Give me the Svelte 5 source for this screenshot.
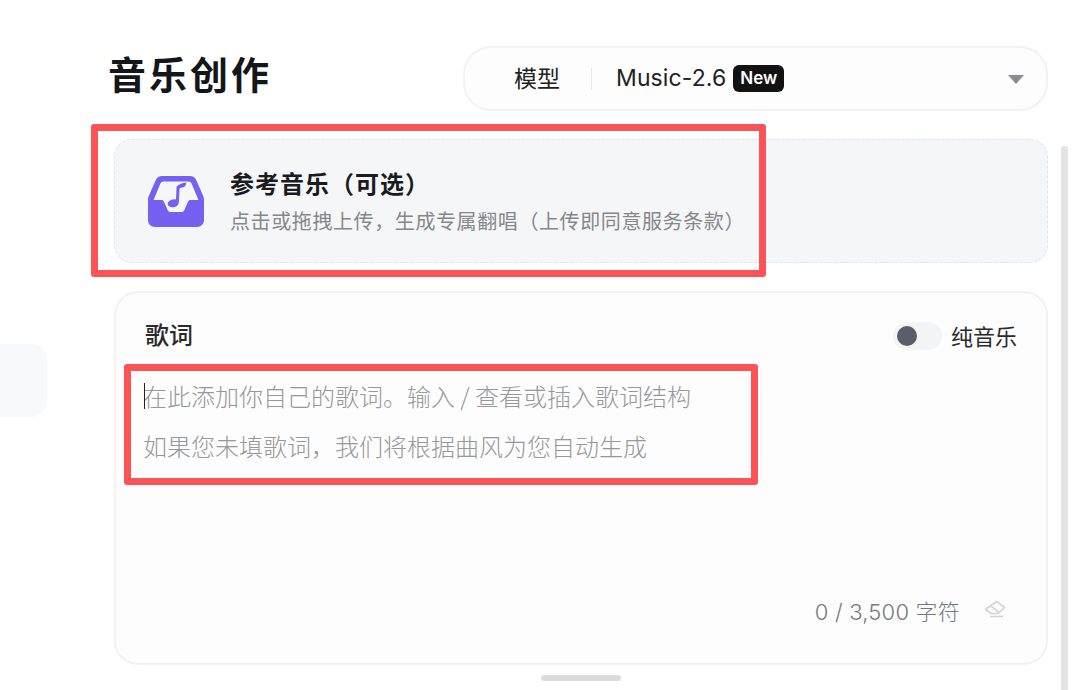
<script lang="ts">
  // Music creation panel, with the two red annotation frames on top.
  const lyricsHints = [
    "在此添加你自己的歌词。输入 / 查看或插入歌词结构",
    "如果您未填歌词，我们将根据曲风为您自动生成",
  ];
</script>

<div class="page">
  <div class="side-stub"></div>

  <main class="panel">
    <header class="head">
      <h1 class="title">音乐创作</h1>
      <div class="model">
        <span class="model-label">模型</span>
        <span class="model-sep"></span>
        <span class="model-name">Music-2.6</span>
        <span class="model-new">New</span>
        <span class="model-caret"></span>
      </div>
    </header>

    <section class="upload">
      <svg class="upload-icon" viewBox="0 0 56 51" width="56" height="51" aria-hidden="true">
        <path
          fill="#7461f1"
          fill-rule="evenodd"
          d="M14 0H42C45 0 47 1.5 48.2 4L55 19.5C55.7 21 56 22.5 56 24.5V44C56 48 53 51 49 51H7C3 51 0 48 0 44V24.5C0 22.5 .3 21 1 19.5L7.8 4C9 1.5 11 0 14 0ZM15.5 5.5C14 5.5 13 6.2 12.4 7.5L5.6 24H13.5C14.6 24 15.4 24.6 15.9 25.6L19.4 33.5C20 35.2 21 36 22.5 36H33.5C35 36 36 35.2 36.6 33.5L40.1 25.6C40.6 24.6 41.4 24 42.5 24H50.4L43.6 7.5C43 6.2 42 5.5 40.5 5.5Z"
        />
        <path
          fill="#7461f1"
          d="M28.6 10.4C31 8.2 34.4 6.8 38.2 6.4C38.2 9.4 36.8 11 34.2 11.6L31.6 12.2L30.8 26.4C30.5 29.6 27.4 31.6 23.8 31.2C20.6 30.8 19 28.8 20 26.6C21 24.4 24.6 22.8 28 23.4Z"
        />
      </svg>
      <div class="upload-text">
        <div class="upload-title">参考音乐（可选）</div>
        <div class="upload-sub">点击或拖拽上传，生成专属翻唱（上传即同意服务条款）</div>
      </div>
    </section>

    <section class="lyrics">
      <div class="lyrics-head">
        <span class="lyrics-title">歌词</span>
        <div class="pure">
          <span class="toggle"><span class="toggle-knob"></span></span>
          <span class="pure-label">纯音乐</span>
        </div>
      </div>
      <div class="lyrics-hints">
        <span class="caret"></span>
        {#each lyricsHints as hint}
          <p class="hint">{hint}</p>
        {/each}
      </div>
      <div class="lyrics-foot">
        <span class="count">0 / 3,500 字符</span>
        <svg class="eraser" viewBox="0 0 22 18" width="22" height="18" aria-hidden="true">
          <path
            fill="none"
            stroke="#d4d4d4"
            stroke-width="1.6"
            stroke-linejoin="round"
            d="M12.5 1.5L20.5 7.5L14 13.5H7L1.5 9.5ZM6.5 5.8L14.8 12M6 16.5H19"
          />
        </svg>
      </div>
    </section>
  </main>

  <div class="handle"></div>
  <div class="scrollbar"></div>

  <div class="mark mark-upload"></div>
  <div class="mark mark-lyrics"></div>
</div>

<style>
  :global(body) {
    margin: 0;
    background: #fff;
  }
  .page {
    position: relative;
    width: 1080px;
    height: 690px;
    overflow: hidden;
    background: #fff;
    font-family: "Noto Sans CJK SC", "Noto Sans", sans-serif;
    color: #17181a;
  }
  .side-stub {
    position: absolute;
    left: 0;
    top: 344px;
    width: 47px;
    height: 73px;
    background: #f8f9fa;
    border-radius: 0 16px 16px 0;
  }
  .panel {
    display: flex;
    flex-direction: column;
    width: 940px;
    margin-left: 108px;
    padding-top: 46px;
  }
  .head {
    display: flex;
    align-items: center;
    justify-content: space-between;
    height: 65px;
  }
  .title {
    margin: 0 0 11px;
    font-size: 38px;
    line-height: 56px;
    font-weight: 700;
    letter-spacing: 3px;
    color: #14161a;
  }
  .model {
    display: flex;
    align-items: center;
    box-sizing: border-box;
    width: 585px;
    height: 65px;
    padding: 0 22px 0 49px;
    border: 2px solid #f2f2f3;
    border-radius: 28px;
    background: #fdfdfd;
  }
  .model-label {
    margin-bottom: 3px;
    font-size: 23px;
    color: #222;
  }
  .model-sep {
    width: 1px;
    height: 22px;
    margin: 0 24px 0 31px;
    background: #e8e8e8;
  }
  .model-name {
    margin-bottom: 1px;
    font-family: Inter, "Noto Sans", sans-serif;
    font-size: 23px;
    letter-spacing: 0.1px;
    color: #222;
  }
  .model-new {
    margin: 0 0 1px 7px;
    padding: 0 7px;
    height: 27px;
    line-height: 26px;
    border-radius: 6px;
    background: #121212;
    color: #fff;
    font-family: Inter, "Noto Sans", sans-serif;
    font-size: 17px;
    font-weight: 600;
  }
  .model-caret {
    margin: 2px 0 0 auto;
    width: 0;
    height: 0;
    border-left: 8px solid transparent;
    border-right: 8px solid transparent;
    border-top: 9px solid #8c8d93;
  }
  .upload {
    display: flex;
    align-items: center;
    box-sizing: border-box;
    height: 124px;
    margin: 28px 0 28px 6px;
    padding: 0 33px;
    border: 1px dashed #e2e5e5;
    border-radius: 18px;
    background: #f5f6f8;
  }
  .upload-icon {
    flex: none;
    margin-right: 26px;
  }
  .upload-text {
    margin-top: 2px;
  }
  .upload-title {
    margin-top: -2px;
    font-size: 24px;
    line-height: 34px;
    font-weight: 700;
    letter-spacing: 1px;
    color: #1a1b1e;
  }
  .upload-sub {
    margin-top: 6px;
    font-size: 20px;
    line-height: 30px;
    letter-spacing: 0.6px;
    color: #85878b;
  }
  .lyrics {
    display: flex;
    flex-direction: column;
    box-sizing: border-box;
    height: 374px;
    margin-left: 6px;
    padding: 22px 29px 36px;
    border: 2px solid #f2f2f3;
    border-radius: 24px;
    background: #fdfdfd;
  }
  .lyrics-head {
    display: flex;
    align-items: center;
    justify-content: space-between;
    height: 36px;
  }
  .lyrics-title {
    font-size: 24px;
    font-weight: 500;
    color: #2a2a2c;
  }
  .pure {
    display: flex;
    align-items: center;
    gap: 9px;
    margin-top: 3px;
  }
  .toggle {
    display: flex;
    align-items: center;
    box-sizing: border-box;
    width: 49px;
    height: 28px;
    margin-top: 2px;
    padding-left: 4px;
    border-radius: 14px;
    background: #f3f4f6;
  }
  .toggle-knob {
    width: 20px;
    height: 20px;
    border-radius: 50%;
    background: #5a5c68;
  }
  .pure-label {
    font-size: 22px;
    color: #2a2a2c;
  }
  .lyrics-hints {
    position: relative;
    flex: 1;
    padding-top: 27px;
  }
  .caret {
    position: absolute;
    left: -1px;
    top: 32px;
    width: 1px;
    height: 26px;
    background: #222;
  }
  .hint {
    margin: 0 0 14px -2px;
    font-size: 24px;
    line-height: 36px;
    font-weight: 300;
    color: #97989a;
    white-space: nowrap;
  }
  .lyrics-foot {
    display: flex;
    align-items: center;
    justify-content: flex-end;
    gap: 24px;
    padding-right: 11px;
    height: 30px;
    margin-top: -2px;
    margin-bottom: 2px;
  }
  .count {
    font-family: Inter, "Noto Sans CJK SC", sans-serif;
    font-size: 22px;
    font-weight: 300;
    letter-spacing: 0.2px;
    color: #77787b;
  }
  .eraser {
    margin-top: -2px;
  }
  .handle {
    position: absolute;
    left: 541px;
    top: 675px;
    width: 80px;
    height: 6px;
    border-radius: 3px;
    background: #dcdcdc;
  }
  .scrollbar {
    position: absolute;
    left: 1061px;
    top: 146px;
    width: 7px;
    height: 544px;
    background: #e3e3e3;
    border-radius: 3px 3px 0 0;
  }
  .mark {
    position: absolute;
    box-sizing: border-box;
    border: 7px solid #fb5357;
    border-radius: 3px;
  }
  .mark-upload {
    left: 91px;
    top: 124px;
    width: 675px;
    height: 153px;
  }
  .mark-lyrics {
    left: 124px;
    top: 364px;
    width: 634px;
    height: 121px;
  }
</style>
